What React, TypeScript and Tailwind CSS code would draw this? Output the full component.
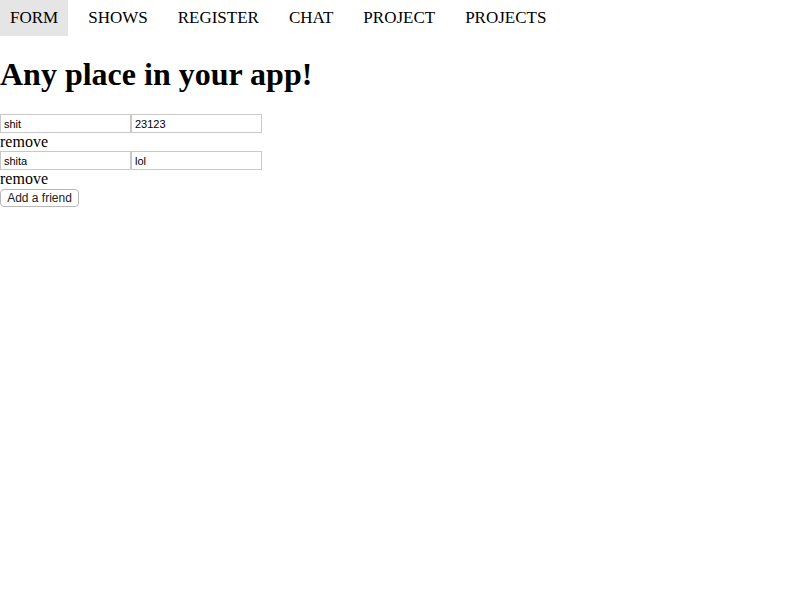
import React from "react";

const items = ["FORM", "SHOWS", "REGISTER", "CHAT", "PROJECT", "PROJECTS"];

export default function App() {
  return (
    <div className="bg-white text-black min-h-[600px]" style={{ fontFamily: '"Liberation Serif", serif' }}>
      <nav className="flex h-[36px] items-center">
        {items.map((it, i) => (
          <div
            key={it}
            className={`h-[36px] flex items-center pb-[1px] px-[10px] mr-[10px] text-[17px] ${i === 0 ? "bg-[#e5e5e5]" : ""}`}
          >
            {it}
          </div>
        ))}
      </nav>
      <h1 className="text-[32px] font-bold leading-[37px] mt-[20px] mb-[21px]">Any place in your app!</h1>
      {[
        ["shit", "23123"],
        ["shita", "lol"],
      ].map(([a, b], i) => (
        <div key={i}>
          <div className="flex">
            <input
              defaultValue={a}
              className="w-[131px] h-[19px] border border-[#c8c8c8] px-[3px] text-[11px] outline-none"
              style={{ fontFamily: '"Liberation Sans", Arial, sans-serif' }}
            />
            <input
              defaultValue={b}
              className="w-[131px] h-[19px] border border-[#c8c8c8] px-[3px] text-[11px] outline-none"
              style={{ fontFamily: '"Liberation Sans", Arial, sans-serif' }}
            />
          </div>
          <div className="text-[16px] leading-[18px]">remove</div>
        </div>
      ))}
      <button
        className="block mt-[1px] w-[79px] h-[18px] border border-[#b8b8b8] rounded-[4px] bg-white text-[12px] leading-[16px] text-[#222]"
        style={{ fontFamily: '"Liberation Sans", Arial, sans-serif' }}
      >
        Add a friend
      </button>
    </div>
  );
}
